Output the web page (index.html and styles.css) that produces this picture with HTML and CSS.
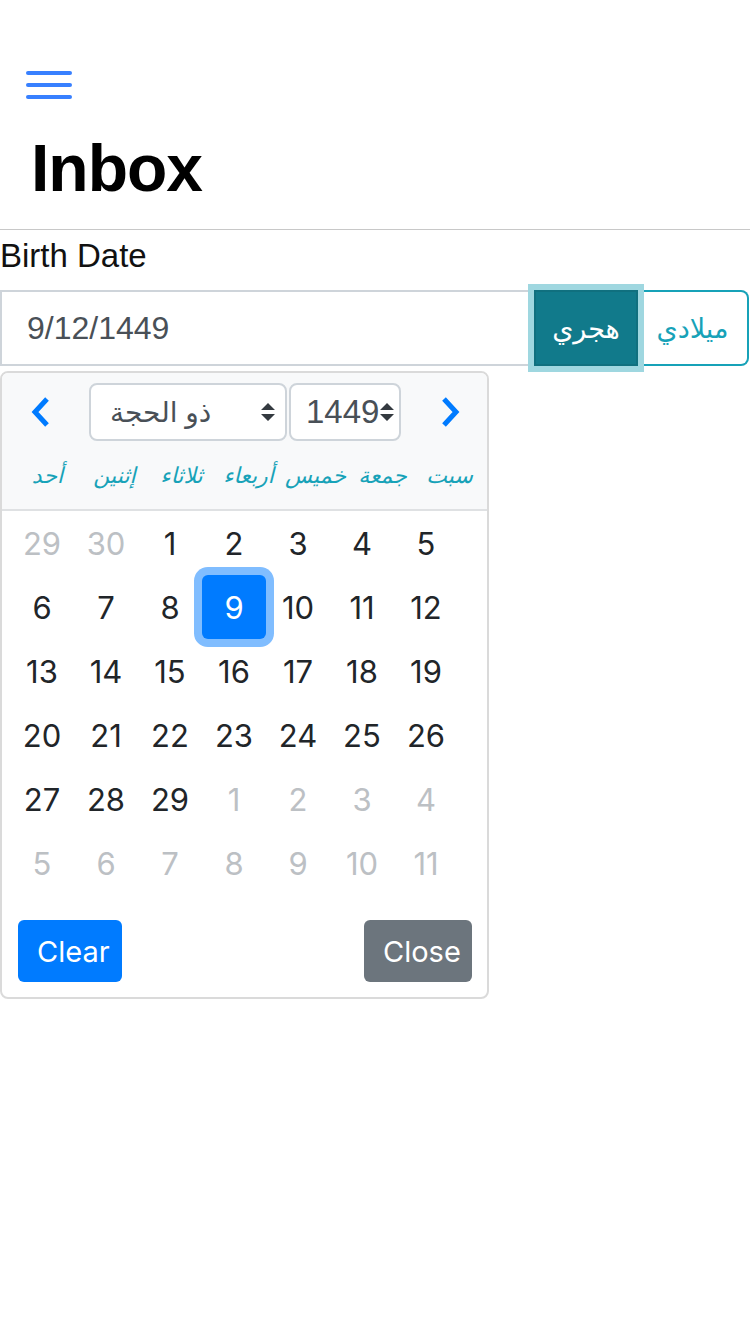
FILE: index.html
```html
<!DOCTYPE html>
<html lang="en">
<head>
<meta charset="utf-8">
<title>Inbox</title>
<link rel="stylesheet" href="styles.css">
</head>
<body>
<header class="toolbar">
  <button class="menu-btn" aria-label="menu">
    <svg width="46" height="30" viewBox="0 0 46 30"><g stroke="#3880ff" stroke-width="4" stroke-linecap="round"><line x1="2" y1="3" x2="44" y2="3"/><line x1="2" y1="15" x2="44" y2="15"/><line x1="2" y1="27" x2="44" y2="27"/></g></svg>
  </button>
</header>
<h1 class="title">Inbox</h1>
<div class="divider"></div>

<main class="form">
  <label class="label">Birth Date</label>
  <div class="input-group">
    <div class="date-input">9/12/1449</div>
    <button class="btn-hijri">هجري</button>
    <button class="btn-greg">ميلادي</button>
  </div>

  <div class="picker">
    <div class="picker-head">
      <div class="nav">
        <button class="nav-btn nav-prev" aria-label="previous">
          <svg width="22" height="32" viewBox="0 0 22 32"><path d="M18 3 L6 16 L18 29" fill="none" stroke="#007bff" stroke-width="5"/></svg>
        </button>
        <div class="select sel-month"><span>ذو الحجة</span><svg class="updown" width="16" height="20" viewBox="0 0 16 20"><path d="M8 1 L15 8 L1 8 Z M8 19 L15 12 L1 12 Z" fill="#343a40"/></svg></div>
        <div class="select sel-year"><span>1449</span><svg class="updown" width="16" height="20" viewBox="0 0 16 20"><path d="M8 1 L15 8 L1 8 Z M8 19 L15 12 L1 12 Z" fill="#343a40"/></svg></div>
        <button class="nav-btn nav-next" aria-label="next">
          <svg width="22" height="32" viewBox="0 0 22 32"><path d="M4 3 L16 16 L4 29" fill="none" stroke="#007bff" stroke-width="5"/></svg>
        </button>
      </div>
      <div class="weekdays">
        <span>أحد</span><span>إثنين</span><span>ثلاثاء</span><span>أربعاء</span><span>خميس</span><span>جمعة</span><span>سبت</span>
      </div>
    </div>
    <div class="days">
      <span class="muted">29</span><span class="muted">30</span><span>1</span><span>2</span><span>3</span><span>4</span><span>5</span>
      <span>6</span><span>7</span><span>8</span><span class="selected">9</span><span>10</span><span>11</span><span>12</span>
      <span>13</span><span>14</span><span>15</span><span>16</span><span>17</span><span>18</span><span>19</span>
      <span>20</span><span>21</span><span>22</span><span>23</span><span>24</span><span>25</span><span>26</span>
      <span>27</span><span>28</span><span>29</span><span class="muted">1</span><span class="muted">2</span><span class="muted">3</span><span class="muted">4</span>
      <span class="muted">5</span><span class="muted">6</span><span class="muted">7</span><span class="muted">8</span><span class="muted">9</span><span class="muted">10</span><span class="muted">11</span>
    </div>
    <div class="picker-foot">
      <button class="btn btn-clear">Clear</button>
      <button class="btn btn-close">Close</button>
    </div>
  </div>
</main>
</body>
</html>
```
FILE: styles.css
```css
* { box-sizing: border-box; }
html, body { margin: 0; padding: 0; background: #fff; }
body { font-family: "Liberation Sans", Arial, "DejaVu Sans", sans-serif; color: #000; width: 750px; }
button { font: inherit; margin: 0; cursor: pointer; }

.toolbar { height: 128px; padding: 70px 0 0 26px; }
.menu-btn { background: none; border: 0; padding: 0; display: block; line-height: 0; }

.title { margin: 0 0 0 31px; font-size: 66px; line-height: 80px; font-weight: 700; letter-spacing: -1px; }
.divider { margin-top: 21px; height: 1px; background: #c8c8c8; }

.form { padding-top: 2px; }
.label { display: block; font-size: 33px; line-height: 48px; color: #111; }

.input-group { margin-top: 10px; display: flex; height: 76px; }
.date-input { flex: 0 0 534px; border: 2px solid #ced4da; border-right: 0; display: flex; align-items: center; padding-left: 25px; font-size: 32px; color: #495057; }
.btn-hijri { position: relative; z-index: 2; flex: 0 0 104px; border: 2px solid #10707f; background: #117a8b; color: #fff; font-family: "DejaVu Sans", sans-serif; font-size: 27px; box-shadow: 0 0 0 6px #9fd7e0; padding: 0; }
.btn-greg { flex: 0 0 111px; border: 2px solid #17a2b8; border-left: 0; border-radius: 0 8px 8px 0; background: #fff; color: #17a2b8; font-family: "DejaVu Sans", sans-serif; font-size: 27px; padding: 0; }

.picker { margin-top: 5px; width: 489px; border: 2px solid #dadada; border-radius: 8px; background: #fff; overflow: hidden; }
.picker-head { background: #f8f9fa; border-bottom: 2px solid #dfe1e3; padding-top: 10px; }
.nav { display: grid; grid-template-columns: 87px 200px 112px 1fr; column-gap: 0; height: 58px; }
.nav-btn { background: none; border: 0; padding: 0; display: flex; align-items: center; }
.nav-prev { padding-left: 27px; }
.nav-next { padding-left: 39px; }
.select { display: flex; align-items: center; justify-content: space-between; border: 2px solid #ced4da; border-radius: 8px; background: #fff; font-family: "Inter", "DejaVu Sans", sans-serif; font-size: 28px; color: #495057; }
.sel-month { padding: 0 9px 0 17px; margin-right: 2px; }
.sel-month span { padding-left: 2px; }
.sel-year { padding: 0 9px 0 15px; }
.sel-year span { font-family: "Liberation Sans", sans-serif; font-size: 33px; }
.updown { flex: none; }

.weekdays { display: grid; grid-template-columns: repeat(7, 67px); padding-left: 12px; height: 68px; align-items: center; }
.weekdays span { text-align: center; font-family: "DejaVu Sans", sans-serif; font-style: italic; font-size: 22px; color: #17a2b8; white-space: nowrap; }

.days { display: grid; grid-template-columns: repeat(7, 64px); grid-auto-rows: 64px; padding-left: 8px; }
.days span { display: flex; align-items: center; justify-content: center; font-family: "Inter", sans-serif; font-size: 31px; color: #212529; }
.days .muted { color: #bcc0c4; }
.days .selected { background: #007bff; color: #fff; border-radius: 6px; box-shadow: 0 0 0 8px #80bdff; position: relative; }

.picker-foot { display: flex; justify-content: space-between; padding: 25px 15px 15px 16px; }
.btn { height: 62px; border: 0; border-radius: 6px; color: #fff; font-family: "Inter", sans-serif; font-size: 29px; padding: 0 19px; }
.btn-clear { background: #007bff; width: 104px; }
.btn-close { background: #6c757d; width: 108px; }
```
